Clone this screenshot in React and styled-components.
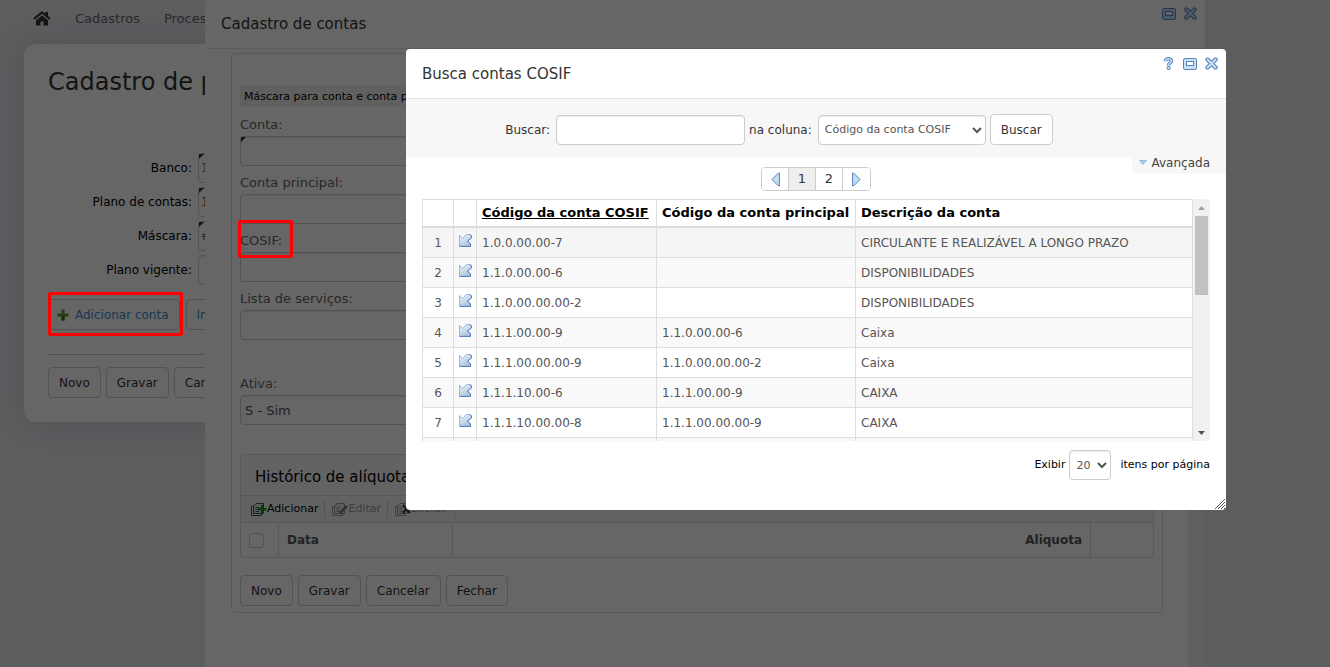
import React from "react";
import styled, { createGlobalStyle, css } from "styled-components";

const Global = createGlobalStyle`
  *, *::before, *::after { box-sizing: border-box; }
  html, body, #root { height: 100%; }
  body {
    margin: 0;
    background: #e7e9ee;
    font: 12px/16px Verdana, "DejaVu Sans", sans-serif;
    color: #444;
    overflow: hidden;
  }
  button, input, select { font: inherit; margin: 0; }
  h1, h2, h3 { margin: 0; font-weight: 400; }
`;

const Screen = styled.div`
  position: relative;
  min-height: 100vh;
  overflow: hidden;
`;

const Shade = styled.div`
  position: absolute;
  inset: 0;
  background: rgba(0, 0, 0, 0.6);
`;

const Highlight = styled.div`
  position: absolute;
  border: 3px solid #f00;
  border-radius: 2px;
  pointer-events: none;
`;
const ButtonHighlight = styled(Highlight)`
  top: 292px;
  left: 48px;
  width: 135px;
  height: 44px;
`;
const FieldHighlight = styled(Highlight)`
  top: 220px;
  left: 238px;
  width: 55px;
  height: 38px;
`;

/* ---------- shared controls ---------- */

const fieldBox = css`
  height: 30px;
  border: 1px solid #ccc;
  border-radius: 4px;
  background: #fff;
  color: #555;
  box-shadow: inset 0 1px 1px rgba(0, 0, 0, 0.08);
`;
const TextInput = styled.input`
  ${fieldBox}
  display: block;
  width: ${(p) => p.$width || "100%"};
  padding: 2px;
`;
const Select = styled.select`
  ${fieldBox}
  width: ${(p) => p.$width};
  padding: 0 ${(p) => (p.$small ? "2px" : "0")};
  font-size: ${(p) => (p.$small ? "11px" : "13px")};
`;
const Button = styled.button`
  height: 31px;
  padding: 0 10px;
  border: 1px solid #ccc;
  border-radius: 4px;
  background: #fff;
  color: #333;
  white-space: nowrap;
`;
const LinkButton = styled(Button)`
  display: flex;
  align-items: center;
  gap: 6px;
  padding-left: ${(p) => (p.$icon ? "8px" : "10px")};
  color: #428bca;
`;
const ButtonRow = styled.div`
  display: flex;
  gap: 5px;
`;
const Required = styled.div`
  position: relative;
  flex: 1;
  &::before {
    content: "";
    position: absolute;
    top: 1px;
    left: 1px;
    border-top: 5px solid #333;
    border-right: 5px solid transparent;
    display: ${(p) => (p.$on ? "block" : "none")};
  }
`;

/* ---------- page behind the windows ---------- */

const Nav = styled.nav`
  display: flex;
  align-items: center;
  gap: 24px;
  height: 44px;
  padding: 0 33px 7px;
  font-size: 13px;
  a { color: #666; text-decoration: none; }
  svg { display: block; }
`;
const Card = styled.main`
  margin: 0 160px 0 24px;
  padding: 22px 24px 24px;
  border-radius: 12px;
  background: #fff;
  box-shadow: 0 0 32px rgba(60, 66, 80, 0.2);
`;
const PageTitle = styled.h1`
  font-size: 24px;
  line-height: 32px;
  color: #333;
  margin-bottom: 55px;
`;
const FormRow = styled.div`
  display: flex;
  align-items: center;
  gap: 6px;
  margin-bottom: 4px;
`;
const FormLabel = styled.label`
  width: 144px;
  text-align: right;
  color: #000;
`;
const LinkRow = styled.div`
  display: flex;
  gap: 6px;
  margin: 14px 0 24px;
`;
const Actions = styled(ButtonRow)`
  border-top: 1px solid #ccc;
  padding-top: 12px;
`;

/* ---------- windows ---------- */

const WindowHeader = styled.header`
  display: flex;
  justify-content: space-between;
  align-items: flex-start;
  height: ${(p) => p.$height};
  padding: 0 8px 0 16px;
  border-bottom: 1px solid #e5e5e5;
`;
const WindowTitle = styled.h2`
  align-self: center;
  font-size: 15px;
  line-height: 20px;
  color: #333;
`;
const WindowTools = styled.div`
  display: flex;
  gap: 8px;
  padding-top: ${(p) => p.$top};
`;
const ToolButton = styled.button`
  padding: 0;
  border: 0;
  background: none;
  line-height: 0;
`;

const AccountWindow = styled.section`
  position: absolute;
  top: 0;
  bottom: 0;
  left: 205px;
  right: 125px;
  display: flex;
  flex-direction: column;
  border-radius: 4px 4px 0 0;
  background: #fff;
`;
const WindowBody = styled.div`
  display: flex;
  flex: 1;
`;
const WindowContent = styled.div`
  flex: 1;
  padding: 4px 25px 0 26px;
`;
const Track = styled.div`
  width: 17px;
  background: #f1f1f1;
`;
const Panel = styled.div`
  padding: 31px 8px 6px;
  border: 1px solid #ddd;
  border-radius: 5px;
`;
const Note = styled.p`
  width: 400px;
  margin: 0 0 5px;
  padding: 5px 4px 3px;
  background: #f0f0f0;
  color: #000;
  font-size: 11px;
  line-height: 14px;
`;
const Field = styled.div`
  width: 400px;
  margin-bottom: ${(p) => (p.$wide ? "31px" : "4px")};
`;
const FieldLabel = styled.label`
  display: block;
  height: 24px;
  line-height: 26px;
  font-size: 13px;
  color: #666;
`;
const Grid = styled.div`
  margin: 29px 0 17px;
  border: 1px solid #ddd;
  border-radius: 4px;
`;
const GridTitle = styled.h3`
  padding: 12px 14px 8px;
  font-size: 15px;
  line-height: 20px;
  color: #000;
  background: #f7f7f7;
`;
const Toolbar = styled.div`
  display: flex;
  align-items: center;
  height: 27px;
  padding-left: 10px;
  border-top: 1px solid #ddd;
  background: #f5f5f5;
`;
const ToolbarButton = styled.button`
  display: flex;
  align-items: center;
  height: 17px;
  margin-right: 7px;
  padding: 0 6px 0 0;
  border: 0;
  border-right: 1px solid #ccc;
  background: none;
  color: #000;
  font-size: 11px;
  &:disabled { color: #999; }
`;
const RateTable = styled.table`
  width: 100%;
  table-layout: fixed;
  border-collapse: separate;
  border-spacing: 0;
  border-top: 1px solid #ddd;
  th {
    height: 34px;
    padding: 0 8px;
    text-align: left;
    color: #555;
    border-right: 1px solid #ddd;
  }
  th:nth-child(1) { width: 38px; }
  th:nth-child(2) { width: 174px; }
  th:nth-child(3) { text-align: right; }
  th:last-child { width: 62px; border-right: 0; }
`;
const Tick = styled.input`
  appearance: none;
  display: block;
  width: 15px;
  height: 15px;
  border: 1px solid #ccc;
  border-radius: 3px;
`;

const SearchWindow = styled.section`
  position: absolute;
  top: 49px;
  left: 406px;
  right: 104px;
  border-radius: 4px;
  background: #fff;
`;
const SearchBar = styled.form`
  display: flex;
  justify-content: center;
  align-items: center;
  gap: 4px;
  height: 59px;
  padding: 2px 74px 0 0;
  background: #f7f7f7;
  color: #333;
  label { margin-right: 2px; }
`;
const PagerRow = styled.div`
  display: grid;
  grid-template-columns: 1fr auto 1fr;
  align-items: start;
  margin-bottom: 8px;
`;
const Advanced = styled.button`
  justify-self: end;
  display: flex;
  align-items: center;
  gap: 5px;
  height: 20px;
  margin-top: -4px;
  padding: 0 16px 3px 7px;
  border: 0;
  border-radius: 0 0 0 4px;
  background: #f7f7f7;
  color: #444;
`;
const Pager = styled.div`
  grid-column: 2;
  display: flex;
  margin-top: 9px;
  border: 1px solid #ccc;
  border-radius: 4px;
  overflow: hidden;
`;
const PageButton = styled.button`
  display: flex;
  align-items: center;
  justify-content: center;
  width: 27px;
  height: 22px;
  padding: 0;
  border: 0;
  border-right: 1px solid #ccc;
  background: ${(p) => (p.$current ? "#eee" : "#fff")};
  color: #333;
  font-size: 13px;
  &:last-child { border-right: 0; }
`;
const ListBox = styled.div`
  display: flex;
  height: 242px;
  margin: 0 16px;
`;
const ListView = styled.div`
  flex: 1;
  overflow: hidden;
`;
const AccountTable = styled.table`
  width: 100%;
  table-layout: fixed;
  border-collapse: separate;
  border-spacing: 0;
  border-top: 1px solid #ddd;
  border-left: 1px solid #ddd;
  color: #555;
  th, td {
    padding: 0 5px;
    border-right: 1px solid #ddd;
    border-bottom: 1px solid #ddd;
    white-space: nowrap;
  }
  th {
    height: 28px;
    border-bottom-width: 2px;
    text-align: left;
    font-size: 13px;
    color: #000;
  }
  td { height: 30px; }
  th:nth-child(1) { width: 31px; }
  th:nth-child(2) { width: 23px; }
  th:nth-child(3) { width: 180px; }
  th:nth-child(4) { width: 199px; }
  td:nth-child(1) { text-align: center; }
  tbody tr:nth-child(even) { background: #f9f9f9; }
  tbody tr:first-child { background: #f5f5f5; }
`;
const Sorted = styled.a`
  color: inherit;
  text-decoration: underline;
`;
const Scrollbar = styled.div`
  display: flex;
  flex-direction: column;
  align-items: center;
  width: 17px;
  padding: 7px 0 6px;
  background: #f1f1f1;
`;
const Thumb = styled.div`
  width: 13px;
  height: 79px;
  margin: 6px 0 auto;
  background: #c1c1c1;
`;
const Footer = styled.footer`
  display: flex;
  justify-content: flex-end;
  align-items: center;
  gap: 4px;
  padding: 9px 16px 30px;
  font-size: 11px;
  line-height: 18px;
  color: #000;
  span { margin-left: 5px; }
`;
const Grip = styled.svg`
  position: absolute;
  right: 1px;
  bottom: 1px;
`;

/* ---------- icons ---------- */

const HomeIcon = () => (
  <svg width="18" height="15" viewBox="0 0 18 15">
    <path d="M12.200 1H15V5H12.200Z" fill="#333" />
    <path d="M1 8L9 1.500L17 8" fill="none" stroke="#333" strokeWidth="2.200" />
    <path d="M9 4.400L3 9.200V14.500H7.500V10.500H10.500V14.500H15V9.200Z" fill="#333" />
  </svg>
);
const PlusIcon = () => (
  <svg width="12" height="12" viewBox="0 0 12 12">
    <path d="M4.500 0.500h3v4h4v3h-4v4h-3v-4h-4v-3h4z" fill="#5f9a28" />
    <path d="M4.500 7.500h3v4h-3z" fill="#3f6f10" />
  </svg>
);
const HelpIcon = () => (
  <svg width="12" height="13" viewBox="0 0 12 13" fill="none">
    <path d="M2.500 4.200C2.500 1 8.300 1 8.300 4 C8.300 6 5.600 6 5.600 8.600" stroke="#6486bd" strokeWidth="3.600" />
    <path d="M2.500 4.200C2.500 1 8.300 1 8.300 4 C8.300 6 5.600 6 5.600 8.400" stroke="#b9dcf5" strokeWidth="1.600" />
    <rect x="4" y="9.500" width="3.200" height="3" rx="1" fill="#b9dcf5" stroke="#6486bd" />
  </svg>
);
const MaximizeIcon = () => (
  <svg width="14" height="12" viewBox="0 0 14 12">
    <rect x="0.5" y="0.5" width="13" height="11" rx="1.500" fill="#c3e2f7" stroke="#5f80bd" />
    <rect x="3.500" y="3.500" width="7" height="4" fill="#fff" stroke="#5f80bd" />
  </svg>
);
const CloseIcon = () => (
  <svg width="13" height="13" viewBox="0 0 13 13" strokeLinecap="round">
    <path d="M2.500 2.500L10.500 10.500M10.500 2.500L2.500 10.500" stroke="#5f80bd" strokeWidth="4.400" />
    <path d="M2.500 2.500L10.500 10.500M10.500 2.500L2.500 10.500" stroke="#c3e2f7" strokeWidth="2.200" />
  </svg>
);
const PickIcon = () => (
  <svg width="13" height="13" viewBox="0 0 13 13">
    <defs>
      <linearGradient id="pick" x1="0" y1="0" x2="0.600" y2="1">
        <stop offset="0" stopColor="#eef9ff" />
        <stop offset="1" stopColor="#a9c3d8" />
      </linearGradient>
    </defs>
    <path
      d="M0.500 1.500L3.500 4.500L7.500 0.500H11.500L12.400 2V4L8.600 7L11.500 10V12.400H0.500Z"
      fill="url(#pick)" stroke="#9bb5e0"
    />
    <path d="M11 0.500L12.400 2V4L8.600 7L11.500 10V12.400H0.500" fill="none" stroke="#5679bd" />
  </svg>
);
const Arrow = ({ left }) => (
  <svg width="9" height="15" viewBox="0 0 9 15">
    <path
      d={left ? "M8.400 1V14L7 13.600L1 7.500L7 1.400Z" : "M0.600 1V14L2 13.600L8 7.500L2 1.400Z"}
      fill="#bfe0f4" stroke="#5a7cba"
    />
  </svg>
);
const MoreIcon = () => (
  <svg width="8" height="5" viewBox="0 0 8 5">
    <path d="M0.500 0.500H7.500L4 4.500Z" fill="#a8d5ee" stroke="#7fb0d6" strokeWidth="0.800" />
  </svg>
);
const SheetIcon = ({ kind }) => {
  const line = kind === "add" ? "#3a4f86" : "#999";
  return (
    <svg width="16" height="13" viewBox="0 0 16 13" fill="none">
      <path d="M3.500 3.500H0.500V12.500H10.500V10.500" stroke={line} />
      <path d="M5 0.500H12.500V10.500H2.500V3Z" fill="#e8e8e8" stroke={line} />
      <path d="M4.500 4.500H8M4.500 6.500H7M4.500 8.500H8" stroke={line} />
      {kind === "add" && <path d="M11 2V10.500M7 6.200H15.500" stroke="#0a9a14" strokeWidth="2.200" />}
      {kind === "edit" && <path d="M8 10L15 3" stroke="#777" strokeWidth="2.600" />}
      {kind === "delete" && <path d="M8 2L15 10M15 2L8 10" stroke="#444" strokeWidth="2.400" />}
    </svg>
  );
};
const ScrollArrow = ({ down }) => (
  <svg width="7" height="4" viewBox="0 0 7 4">
    <path d={down ? "M0 0H7L3.500 4Z" : "M0 4H7L3.500 0Z"} fill={down ? "#505050" : "#a3a3a3"} />
  </svg>
);

/* ---------- data ---------- */

const accounts = [
  ["1.0.0.00.00-7", "", "CIRCULANTE E REALIZÁVEL A LONGO PRAZO"],
  ["1.1.0.00.00-6", "", "DISPONIBILIDADES"],
  ["1.1.0.00.00.00-2", "", "DISPONIBILIDADES"],
  ["1.1.1.00.00-9", "1.1.0.00.00-6", "Caixa"],
  ["1.1.1.00.00.00-9", "1.1.0.00.00.00-2", "Caixa"],
  ["1.1.1.10.00-6", "1.1.1.00.00-9", "CAIXA"],
  ["1.1.1.10.00.00-8", "1.1.1.00.00.00-9", "CAIXA"],
  ["", "", ""],
];

const planFields = [
  { id: "banco", label: "Banco:", value: "1", required: true },
  { id: "plano", label: "Plano de contas:", value: "1", required: true },
  { id: "mascara", label: "Máscara:", value: "#", required: true },
  { id: "vigente", label: "Plano vigente:", value: "", required: false },
];

const accountFields = [
  { id: "conta", label: "Conta:", required: true },
  { id: "principal", label: "Conta principal:" },
  { id: "cosif", label: "COSIF:" },
  { id: "servicos", label: "Lista de serviços:", wide: true },
];

export default function App() {
  return (
    <>
      <Global />
      <Screen>
        <Nav>
          <a href="#inicio" aria-label="Início"><HomeIcon /></a>
          <a href="#cadastros">Cadastros</a>
          <a href="#processos">Processos</a>
        </Nav>
        <Card>
          <PageTitle>Cadastro de plano</PageTitle>
          {planFields.map((f) => (
            <FormRow key={f.id}>
              <FormLabel htmlFor={f.id}>{f.label}</FormLabel>
              <Required $on={f.required}>
                <TextInput id={f.id} defaultValue={f.value} />
              </Required>
            </FormRow>
          ))}
          <LinkRow>
            <LinkButton $icon><PlusIcon />Adicionar conta</LinkButton>
            <LinkButton>Importar</LinkButton>
          </LinkRow>
          <Actions>
            <Button>Novo</Button>
            <Button>Gravar</Button>
            <Button>Cancelar</Button>
          </Actions>
        </Card>

        <AccountWindow>
          <WindowHeader $height="49px">
            <WindowTitle>Cadastro de contas</WindowTitle>
            <WindowTools $top="7px">
              <ToolButton aria-label="Maximizar"><MaximizeIcon /></ToolButton>
              <ToolButton aria-label="Fechar janela"><CloseIcon /></ToolButton>
            </WindowTools>
          </WindowHeader>
          <WindowBody>
            <WindowContent>
              <Panel>
                <Note>Máscara para conta e conta principal</Note>
                {accountFields.map((f) => (
                  <Field key={f.id} $wide={f.wide}>
                    <FieldLabel htmlFor={f.id}>{f.label}</FieldLabel>
                    <Required $on={f.required}>
                      <TextInput id={f.id} />
                    </Required>
                  </Field>
                ))}
                <Field>
                  <FieldLabel htmlFor="ativa">Ativa:</FieldLabel>
                  <Select id="ativa" $width="400px"><option>S - Sim</option></Select>
                </Field>
                <Grid>
                  <GridTitle>Histórico de alíquotas</GridTitle>
                  <Toolbar>
                    <ToolbarButton><SheetIcon kind="add" />Adicionar</ToolbarButton>
                    <ToolbarButton disabled><SheetIcon kind="edit" />Editar</ToolbarButton>
                    <ToolbarButton disabled><SheetIcon kind="delete" />Excluir</ToolbarButton>
                  </Toolbar>
                  <RateTable>
                    <thead>
                      <tr>
                        <th><Tick type="checkbox" aria-label="Selecionar tudo" /></th>
                        <th>Data</th>
                        <th>Aliquota</th>
                        <th />
                      </tr>
                    </thead>
                  </RateTable>
                </Grid>
                <ButtonRow>
                  <Button>Novo</Button>
                  <Button>Gravar</Button>
                  <Button>Cancelar</Button>
                  <Button>Fechar</Button>
                </ButtonRow>
              </Panel>
            </WindowContent>
            <Track />
          </WindowBody>
        </AccountWindow>

        <Shade />

        <SearchWindow>
          <WindowHeader $height="50px">
            <WindowTitle>Busca contas COSIF</WindowTitle>
            <WindowTools $top="8px">
              <ToolButton aria-label="Ajuda"><HelpIcon /></ToolButton>
              <ToolButton aria-label="Maximizar"><MaximizeIcon /></ToolButton>
              <ToolButton aria-label="Fechar janela"><CloseIcon /></ToolButton>
            </WindowTools>
          </WindowHeader>
          <SearchBar>
            <label htmlFor="termo">Buscar:</label>
            <TextInput id="termo" $width="189px" />
            <label htmlFor="coluna">na coluna:</label>
            <Select id="coluna" $width="168px" $small><option>Código da conta COSIF</option></Select>
            <Button type="button">Buscar</Button>
          </SearchBar>
          <PagerRow>
            <Pager>
              <PageButton aria-label="Anterior"><Arrow left /></PageButton>
              <PageButton $current>1</PageButton>
              <PageButton>2</PageButton>
              <PageButton aria-label="Próxima"><Arrow /></PageButton>
            </Pager>
            <Advanced><MoreIcon />Avançada</Advanced>
          </PagerRow>
          <ListBox>
            <ListView>
              <AccountTable>
                <thead>
                  <tr>
                    <th />
                    <th />
                    <th><Sorted href="#codigo">Código da conta COSIF</Sorted></th>
                    <th>Código da conta principal</th>
                    <th>Descrição da conta</th>
                  </tr>
                </thead>
                <tbody>
                  {accounts.map(([code, parent, name], i) => (
                    <tr key={i}>
                      <td>{code && i + 1}</td>
                      <td>{code && <PickIcon />}</td>
                      <td>{code}</td>
                      <td>{parent}</td>
                      <td>{name}</td>
                    </tr>
                  ))}
                </tbody>
              </AccountTable>
            </ListView>
            <Scrollbar>
              <ScrollArrow />
              <Thumb />
              <ScrollArrow down />
            </Scrollbar>
          </ListBox>
          <Footer>
            <label htmlFor="itens">Exibir</label>
            <Select id="itens" $width="42px" $small><option>20</option></Select>
            <span>itens por página</span>
          </Footer>
          <Grip width="10" height="10" viewBox="0 0 10 10" stroke="#555" strokeWidth="1">
            <path d="M0 10L10 0M3 10L10 3M6 10L10 6M9 10L10 9" />
          </Grip>
        </SearchWindow>

        <ButtonHighlight />
        <FieldHighlight />
      </Screen>
    </>
  );
}
